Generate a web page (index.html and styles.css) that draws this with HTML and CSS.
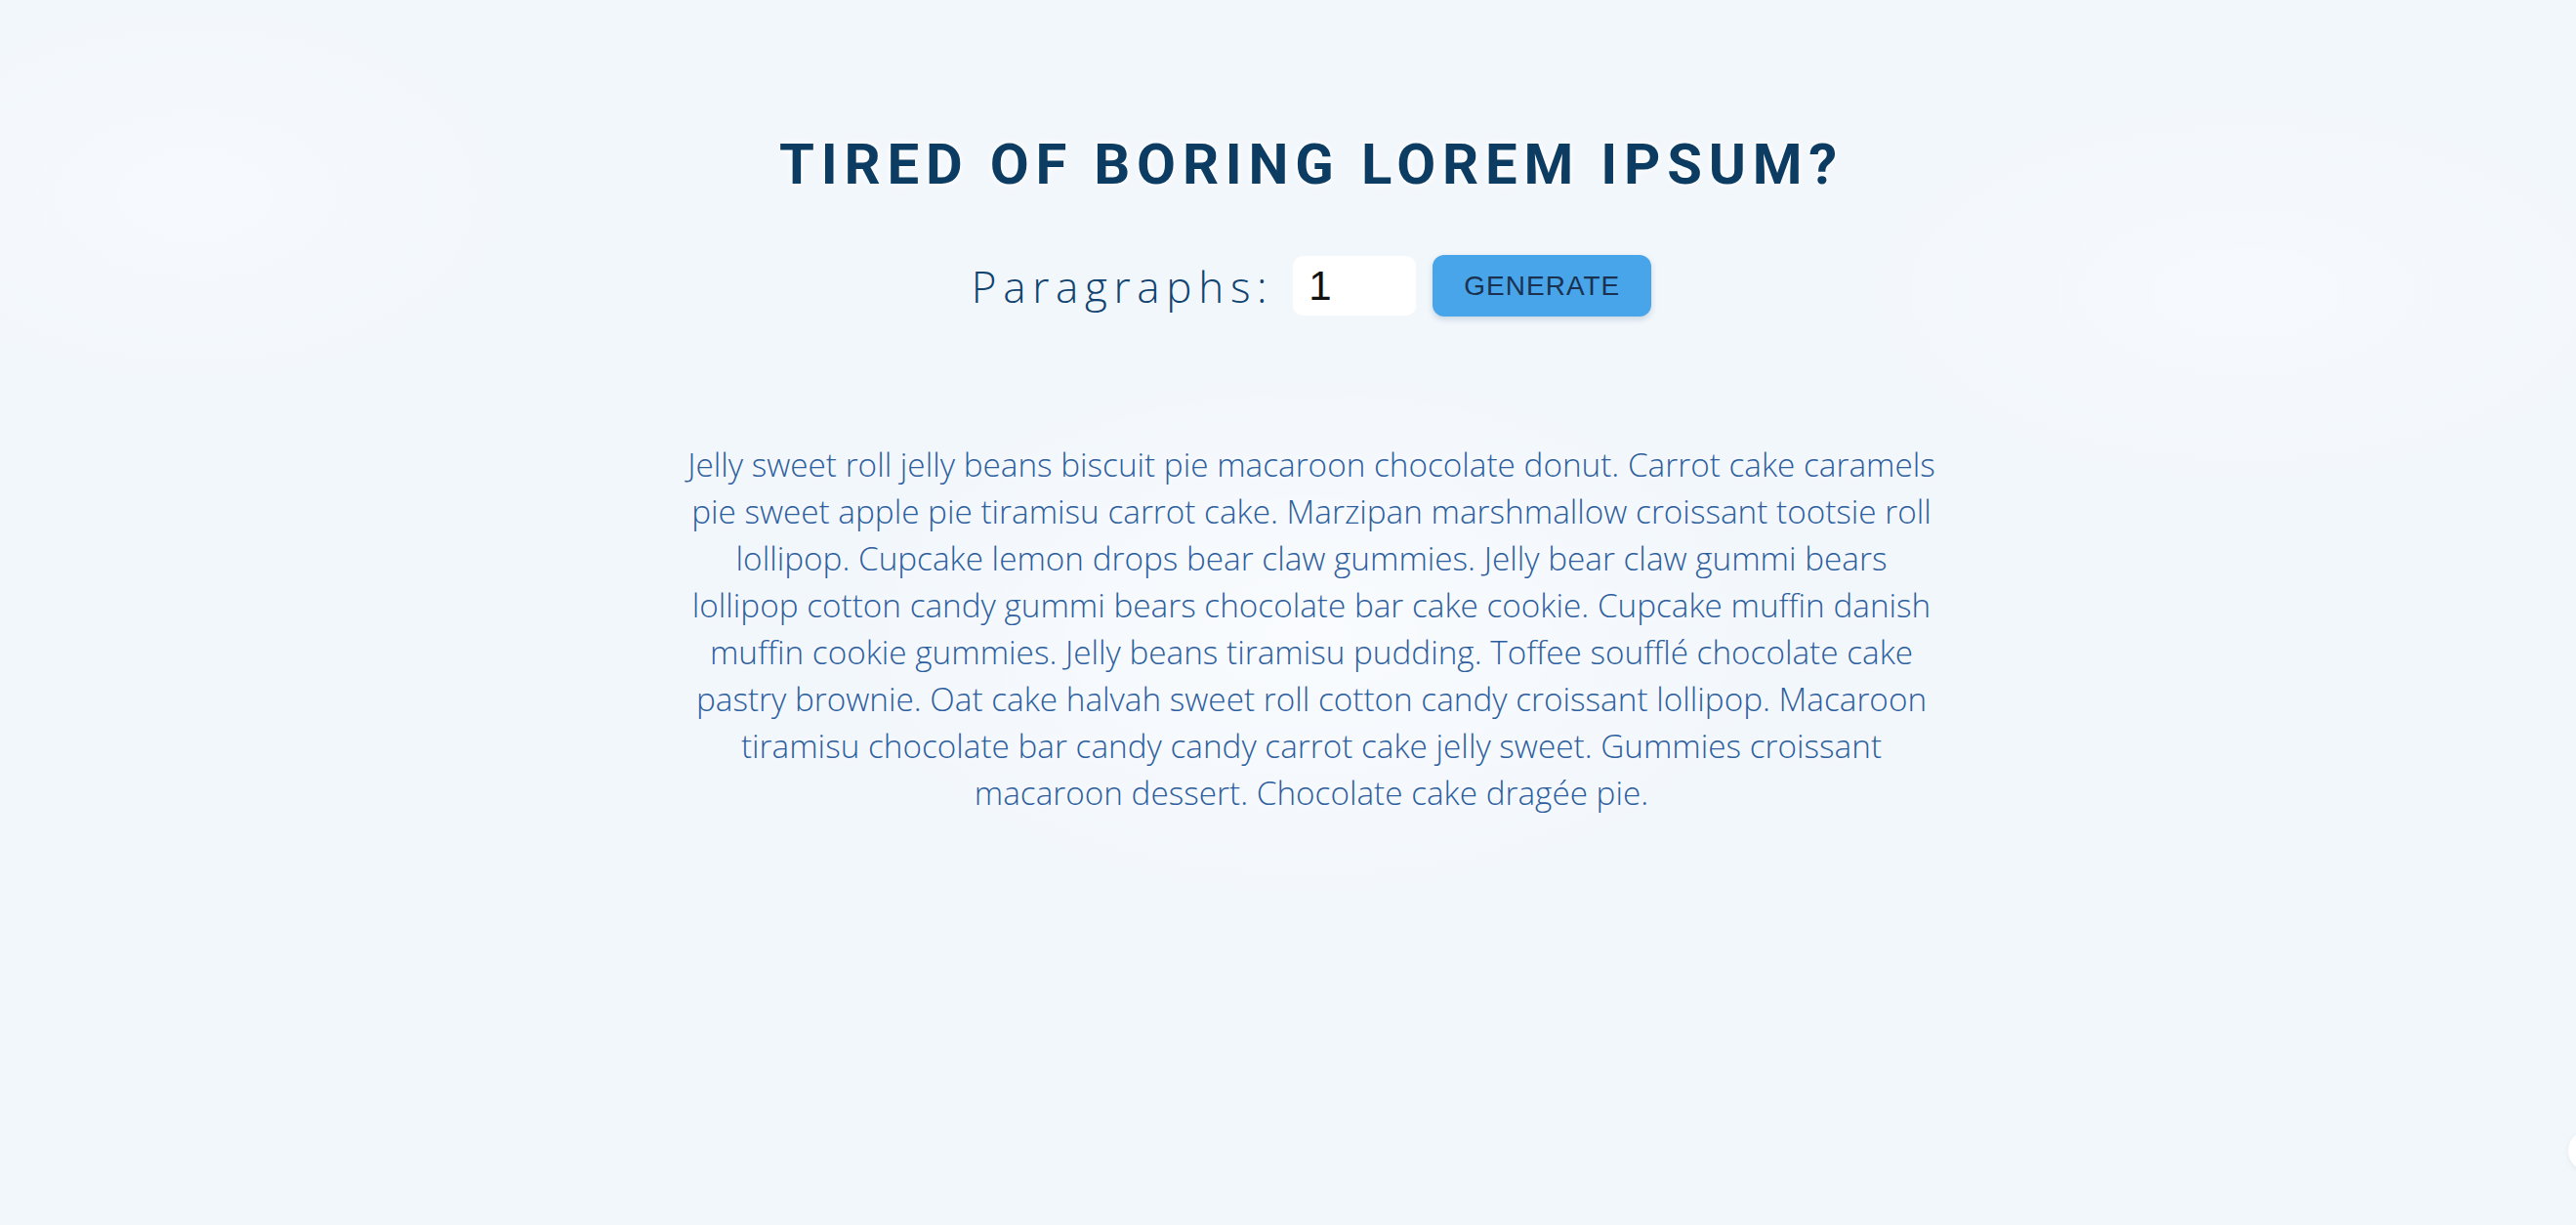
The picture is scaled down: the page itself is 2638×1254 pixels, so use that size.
FILE: index.html
```html
<!DOCTYPE html>
<html lang="en">
<head>
<meta charset="utf-8">
<title>Lorem Ipsum Generator</title>
<link rel="stylesheet" href="styles.css">
</head>
<body>
<main class="page">
  <h1 class="title">TIRED OF BORING LOREM IPSUM?</h1>
  <form class="controls">
    <label class="label" for="amount">Paragraphs:</label>
    <input class="amount" id="amount" type="number" value="1">
    <button class="generate" type="button">GENERATE</button>
  </form>
  <section class="result">
    <p class="text">Jelly sweet roll jelly beans biscuit pie macaroon chocolate donut. Carrot cake caramels pie sweet apple pie tiramisu carrot cake. Marzipan marshmallow croissant tootsie roll lollipop. Cupcake lemon drops bear claw gummies. Jelly bear claw gummi bears lollipop cotton candy gummi bears chocolate bar cake cookie. Cupcake muffin danish muffin cookie gummies. Jelly beans tiramisu pudding. Toffee soufflé chocolate cake pastry brownie. Oat cake halvah sweet roll cotton candy croissant lollipop. Macaroon tiramisu chocolate bar candy candy carrot cake jelly sweet. Gummies croissant macaroon dessert. Chocolate cake dragée pie.</p>
  </section>
</main>
<div class="fab"></div>
</body>
</html>
```

FILE: styles.css
```css
html, body {
  margin: 0;
  padding: 0;
  height: 100%;
}
body {
  background-color: #f2f7fc;
  background-image:
    radial-gradient(ellipse 700px 400px at 1340px 650px, rgba(255,255,255,0.55), rgba(255,255,255,0) 70%),
    radial-gradient(ellipse 500px 300px at 200px 200px, rgba(255,255,255,0.35), rgba(255,255,255,0) 70%),
    radial-gradient(ellipse 600px 300px at 2300px 300px, rgba(255,255,255,0.35), rgba(255,255,255,0) 70%);
  font-family: "Open Sans", sans-serif;
  overflow: hidden;
}
.page {
  display: flex;
  flex-direction: column;
  align-items: center;
  padding: 133px 0 0 48px;
}
.title {
  margin: 0;
  font-family: Roboto, sans-serif;
  font-weight: 700;
  font-size: 58px;
  line-height: 70px;
  letter-spacing: 6.8px;
  color: #0d3c62;
  text-shadow: 0 0 10px #ffffff, 0 0 4px #ffffff;
}
.controls {
  display: flex;
  align-items: center;
  margin: 58px 0 0 0;
  height: 63px;
}
.label {
  font-family: "Open Sans", sans-serif;
  font-weight: 300;
  font-size: 44px;
  letter-spacing: 6.7px;
  color: #104370;
  margin-right: 20px;
}
.amount {
  box-sizing: border-box;
  width: 126px;
  height: 61px;
  border: none;
  border-radius: 10px;
  background: #ffffff;
  padding: 0 0 0 16px;
  font-family: "Liberation Sans", Arial, sans-serif;
  font-size: 42px;
  color: #111111;
  outline: none;
  -moz-appearance: textfield;
}
.amount::-webkit-outer-spin-button,
.amount::-webkit-inner-spin-button {
  -webkit-appearance: none;
  margin: 0;
}
.generate {
  box-sizing: border-box;
  width: 224px;
  height: 63px;
  margin-left: 17px;
  border: none;
  border-radius: 12px;
  background: #49a5ea;
  box-shadow: 0 3px 6px rgba(30, 60, 100, 0.18);
  font-family: "Liberation Sans", Arial, sans-serif;
  font-size: 28px;
  letter-spacing: 1px;
  color: #1a3250;
  padding: 0;
}
.result {
  margin-top: 127px;
  width: 1285px;
}
.text {
  margin: 0;
  text-align: center;
  font-family: "Open Sans", sans-serif;
  font-weight: 300;
  font-size: 33.3px;
  line-height: 48px;
  color: #2d5f9f;
  text-shadow: 0 0 8px #ffffff;
}
.fab {
  position: fixed;
  left: 2630px;
  top: 1157px;
  width: 42px;
  height: 42px;
  border-radius: 50%;
  background: #ffffff;
  box-shadow: 0 2px 6px rgba(0,0,0,0.06);
}
```
